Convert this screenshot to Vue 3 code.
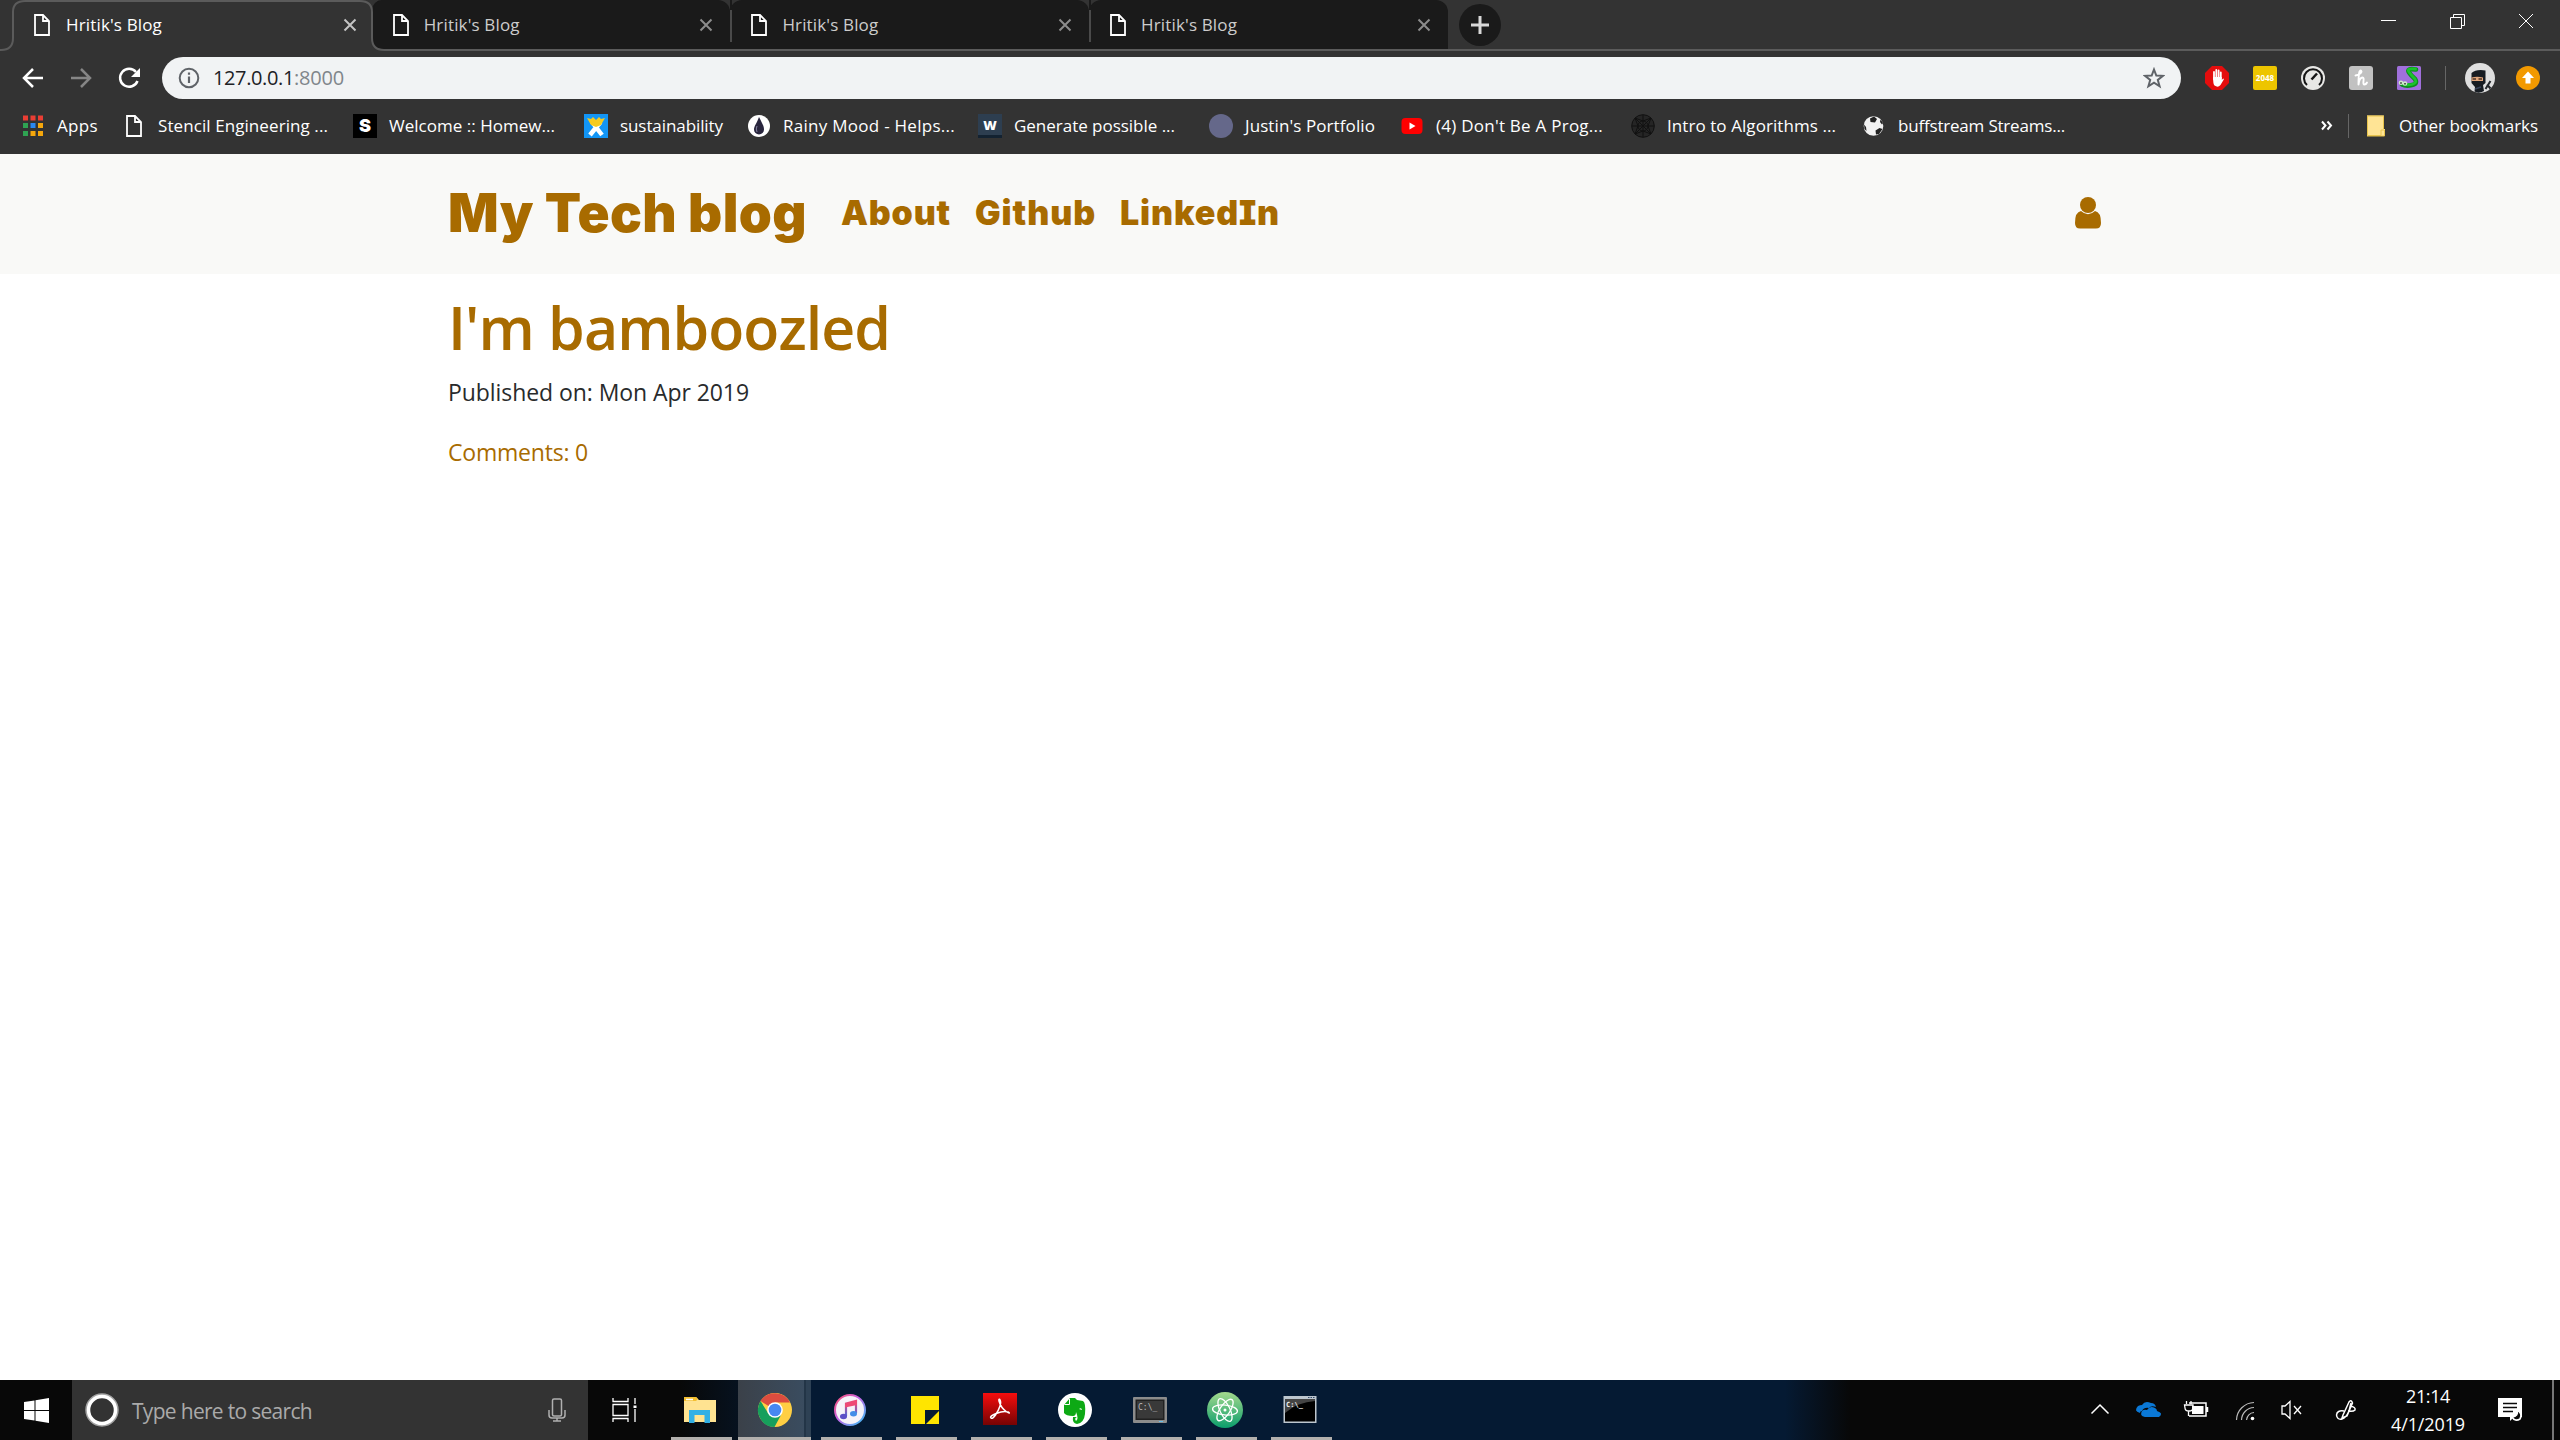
<script setup>
const vFit = {
  mounted(el, { value }) {
    const width = el.getBoundingClientRect().width
    const count = el.textContent.length
    el.style.letterSpacing = `${(value - width) / count}px`
  },
}

const tabs = [1, 2, 3, 4]

const bookmarks = [
  { icon: 'apps', label: 'Apps', slot: 101, text: 41 },
  { icon: 'page', label: 'Stencil Engineering ...', slot: 231, text: 170 },
  { icon: 's', label: 'Welcome :: Homew...', slot: 231, text: 166 },
  { icon: 'x', label: 'sustainability', slot: 163, text: 103 },
  { icon: 'drop', label: 'Rainy Mood - Helps...', slot: 231, text: 172 },
  { icon: 'w', label: 'Generate possible ...', slot: 231, text: 161 },
  { icon: 'dot', label: "Justin's Portfolio", slot: 191, text: 130 },
  { icon: 'yt', label: "(4) Don't Be A Prog...", slot: 231, text: 167 },
  { icon: 'web', label: 'Intro to Algorithms ...', slot: 231, text: 169 },
  { icon: 'ball', label: 'buffstream Streams...', slot: 231, text: 167 },
]

const links = [
  { label: 'About', width: 110 },
  { label: 'Github', width: 121 },
  { label: 'LinkedIn', width: 160 },
]

const apps = ['explorer', 'chrome', 'itunes', 'sticky', 'acrobat', 'evernote', 'terminal', 'atom', 'cmd']
</script>

<template>
  <div class="screen">
    <div class="tabstrip">
      <div v-for="(t, i) in tabs" :key="t" class="tab" :class="{ active: i === 0, last: i === 3, second: i === 1 }">
        <svg v-if="i === 0" class="outline" width="386" height="51" viewBox="0 0 386 51">
          <path d="M0 51V50H1Q13 50 13 38V12Q13 1 25 1H360Q372 1 372 12V38Q372 50 384 50H386V51Z" fill="#333" />
          <path d="M0 50H1Q13 50 13 38V12Q13 1 25 1H360Q372 1 372 12V38Q372 50 384 50H386" fill="none" stroke="#5b5b5b" stroke-width="2" />
        </svg>
        <svg class="page" width="18" height="24" viewBox="0 0 18 24"><path d="M2 2H10L16 8V22H2ZM10 2V8H16" /></svg>
        <span v-fit="96" class="title">Hritik's Blog</span>
        <svg class="close" width="14" height="14" viewBox="0 0 14 14"><path d="M1.500 1.500L12.500 12.500M12.500 1.500L1.500 12.500" /></svg>
      </div>
      <div class="newtab">
        <svg width="18" height="18" viewBox="0 0 18 18"><path d="M9 0V18M0 9H18" stroke="#d8d8d8" stroke-width="3" /></svg>
      </div>
      <svg class="winbtns" width="160" height="24" viewBox="0 0 160 24" fill="none" stroke="#fff" stroke-width="1">
        <path d="M4 12.500H19M73.500 9.500H84.500V20.500H73.500ZM76.500 9.500V6.500H87.500V17.500H84.500M142 6L156 20M156 6L142 20" />
      </svg>
    </div>

    <div class="toolbar">
      <svg class="nav" width="150" height="42" viewBox="0 0 150 42" fill="none" stroke="#fff" stroke-width="2.500">
        <path d="M43 21H25M33 12L24 21L33 30" />
        <path stroke="#868686" d="M71 21H90M81 12L90 21L81 30" />
        <path d="M136 15A9 9 0 1 0 137.500 24" /><path d="M140 11V20H131Z" fill="#fff" stroke="none" />
      </svg>
      <div class="omnibox">
        <svg width="22" height="22" viewBox="0 0 22 22" fill="none" stroke="#5f6368" stroke-width="2"><circle cx="11" cy="11" r="9.300" /><path d="M11 9.500V16M11 5.500V7.800" stroke-width="2.200" /></svg>
        <span class="url"><b v-fit="81">127.0.0.1</b><i v-fit="50">:8000</i></span>
        <svg class="star" width="22" height="22" viewBox="0 0 22 22" fill="none" stroke="#5f6368" stroke-width="2"><path d="M11 2.500L13.300 8.500L20 8.800L14.800 12.900L16.600 19.300L11 15.700L5.400 19.300L7.200 12.900L2 8.800L8.700 8.500Z" /></svg>
      </div>
      <div class="exts">
        <svg width="24" height="24" viewBox="0 0 24 24"><path d="M7 0H17L24 7V17L17 24H7L0 17V7Z" fill="#e40d0d" /><path d="M9 13V6M11.300 12V4M13.600 12V4.500M15.800 13V6.500" stroke="#fff" stroke-width="1.800" stroke-linecap="round" /><path d="M8.100 11H16.700V14L18.200 12.500Q19.500 12.500 18.500 14L15.500 19Q13 22 9.500 19.500Q8 18 8.100 11Z" fill="#fff" /></svg>
        <span class="e2048">2048</span>
        <svg width="24" height="24" viewBox="0 0 24 24" fill="none"><circle cx="12" cy="12" r="12" fill="#e7e7e5" /><path d="M6 19A9 9 0 1 1 18 19" stroke="#151515" stroke-width="2" /><path d="M10.500 13.500L16 7.500" stroke="#151515" stroke-width="2.500" /></svg>
        <span class="honey"><svg width="24" height="24" viewBox="0 0 24 24" fill="none" stroke="#fff" stroke-width="1.900" stroke-linecap="round" stroke-linejoin="round"><path d="M6.500 9.500Q12.500 8 12.500 5.500Q12 3.500 10.500 5.500Q9.500 8 9.500 18.500Q10.500 11.500 13.500 11.500Q15 11.500 14.500 15Q14 18.500 15.500 18.500Q17 18.500 18 16.500" /></svg></span>
        <svg width="24" height="24" viewBox="0 0 24 24" fill="none"><rect width="24" height="24" rx="1.500" fill="#a070dc" /><path d="M19 3.500Q9 2 12 6.500Q14 9.500 18 13Q21 18 15 19Q9 20.500 5 18.500" stroke="#0d8c1d" stroke-width="4.600" stroke-linecap="round" /><path d="M18.500 3Q9 2 12 6Q14 9 18 13Q20.500 17 15 18.300Q9 19.500 5 17.500" stroke="#19c42c" stroke-width="2.800" stroke-linecap="round" /><circle cx="4" cy="16.800" r="2.300" fill="#cfe8cb" /><circle cx="8" cy="17.500" r="2.300" fill="#cfe8cb" /><path d="M3.300 17H4.700M7.300 17.700H8.700" stroke="#222" stroke-width="1.400" /></svg>
      </div>
      <i class="vline"></i>
      <svg class="avatar" width="30" height="30" viewBox="0 0 30 30"><circle cx="15" cy="15" r="15" fill="#dfdfdf" /><path d="M6.500 10Q11 6 20.500 7.500L20.500 20L18 22L19 28Q14 31 9.500 28.500L10 24L6.500 20Z" fill="#171c22" /><path d="M6.500 14.500Q12 13 18 14.500V18H6.500Z" fill="#e0a57b" /><path d="M7.500 16H11M13.500 16H17" stroke="#4a3326" stroke-width="1.500" /><path d="M10 26L16 24" stroke="#39445a" stroke-width="1.500" /><path d="M20.500 26L25.500 18M22 21.500L25.500 25.500" stroke="#24282c" stroke-width="2" /></svg>
      <svg class="update" width="24" height="24" viewBox="0 0 24 24"><circle cx="12" cy="12" r="12" fill="#f29900" /><path d="M12 5.500L18 12H14.500V17.500H9.500V12H6Z" fill="#fff" /></svg>
    </div>

    <div class="bookmarks">
      <div v-for="b in bookmarks" :key="b.label" class="bm" :style="{ width: b.slot + 'px' }">
        <svg width="24" height="24" viewBox="0 0 24 24">
          <g v-if="b.icon === 'apps'">
            <path d="M2 1.500h5v5H2zM9.500 1.500h5v5h-5zM17 1.500h5v5h-5z" fill="#ea3e34" />
            <path d="M2 9h5v5H2zM2 17h5v5H2z" fill="#2fa352" /><path d="M9.500 9h5v5h-5z" fill="#2a87f0" />
            <path d="M17 9h5v5h-5zM9.500 17h5v5h-5zM17 17h5v5h-5z" fill="#f5a70c" />
          </g>
          <path v-else-if="b.icon === 'page'" d="M5 2H13L19 8V22H5ZM13 2V8H19" fill="none" stroke="#fff" stroke-width="1.800" />
          <g v-else-if="b.icon === 's'"><rect width="24" height="24" fill="#000" /><text x="12" y="18" text-anchor="middle" fill="#fff" font-family="Inter" font-weight="900" font-size="18">S</text></g>
          <g v-else-if="b.icon === 'x'"><rect width="24" height="24" fill="#1295f5" /><path d="M6 21L16.500 8M18 21L8 8" stroke="#fff" stroke-width="4.500" /><path d="M3 4L7 5L9 3L12 6L15 3L17 5L21 4L17 11L12 13L7 11Z" fill="#f5cb20" /></g>
          <g v-else-if="b.icon === 'drop'"><circle cx="12" cy="12" r="11" fill="#fff" /><path d="M12 3C15 9 17 12 17 15.500A5 5 0 0 1 7 15.500C7 12 10 9 12 3Z" fill="#29263e" /><path d="M10 12Q8.500 15 10 18" stroke="#8583a0" fill="none" /></g>
          <g v-else-if="b.icon === 'w'"><rect width="24" height="24" fill="#2d3e50" /><rect y="21" width="24" height="3" fill="#132231" /><text x="12" y="15.500" text-anchor="middle" fill="#fff" font-family="Open Sans" font-weight="800" font-size="13">W</text></g>
          <circle v-else-if="b.icon === 'dot'" cx="12" cy="12" r="12" fill="#65688a" />
          <g v-else-if="b.icon === 'yt'"><rect x="1.500" y="4" width="21" height="16" rx="4" fill="#f00" /><path d="M9.500 8.500L15.500 12L9.500 15.500Z" fill="#fff" /></g>
          <g v-else-if="b.icon === 'web'" fill="none" stroke="#111" stroke-width="1"><circle cx="12" cy="12" r="11.300" fill="#252525" /><circle cx="12" cy="12" r="5" /><path d="M12 1V23M1 12H23M4 4L20 20M20 4L4 20M4 4L12 7L20 4L17 12L20 20L12 17L4 20L7 12Z" /></g>
          <g v-else><circle cx="11.500" cy="12" r="9.800" fill="#f2f2f2" /><path d="M8 4.500L12 2.500L15 5L13 8.500L8.500 8ZM2 10.500L4 13L4.500 17L2.500 15ZM13.500 16.500L17.500 14L20.500 15L17 20L14 20.500ZM18.500 5.500L21 9L20 10.500L18 8Z" fill="#222" /></g>
        </svg>
        <span v-fit="b.text">{{ b.label }}</span>
      </div>
      <svg class="more" width="12" height="12" viewBox="0 0 12 12" fill="none" stroke="#fff" stroke-width="2"><path d="M1 1.500L4.500 5.500L1 9.500M6.500 1.500L10 5.500L6.500 9.500" /></svg>
      <i class="vline"></i>
      <svg class="folder" width="20" height="24" viewBox="0 0 20 24"><path d="M1 1.500H18V15H19V22H1Z" fill="#ffe495" /><path d="M1.500 2V21.500H15V16H18.500V22H1M1 2H17.500V15" fill="none" stroke="#e8c44c" /></svg>
      <span v-fit="139">Other bookmarks</span>
    </div>

    <header class="site">
      <span v-fit="359" class="brand">My Tech blog</span>
      <nav><a v-for="l in links" :key="l.label" v-fit="l.width">{{ l.label }}</a></nav>
      <svg class="user" width="26" height="32" viewBox="0 0 26 32" fill="#a86b00"><circle cx="13" cy="8" r="8" /><path d="M6 14Q13 20.500 20 14Q26 15 26 26Q26 31.500 21 31.500H5Q0 31.500 0 26Q0 15 6 14Z" /></svg>
    </header>

    <main>
      <h1><span v-fit="442">I'm bamboozled</span></h1>
      <p><span v-fit="301">Published on: Mon Apr 2019</span></p>
      <a class="comments"><span v-fit="140">Comments: 0</span></a>
    </main>

    <footer class="taskbar">
      <div class="start"><svg width="25" height="25" viewBox="0 0 25 25" fill="#fff"><path d="M0 4L10.500 2.500V12H0ZM11.500 2.300L25 0V12H11.500ZM0 13H10.500V22.500L0 21ZM11.500 13H25V25L11.500 22.700Z" /></svg></div>
      <div class="search">
        <svg width="34" height="34" viewBox="0 0 34 34" fill="none"><circle cx="17" cy="17" r="15.500" stroke="#a3a3a3" stroke-width="2.500" /><circle cx="17" cy="17" r="13.500" stroke="#fff" stroke-width="3.500" /></svg>
        <span v-fit="180">Type here to search</span>
        <svg class="mic" width="18" height="24" viewBox="0 0 18 24" fill="none" stroke="#b0b0b0" stroke-width="1.500"><rect x="4.500" y="1" width="9" height="17" rx="1.500" /><path d="M1 12V17Q1 20 4 20H14Q17 20 17 17V12M9 20V23M5 23H13" /></svg>
      </div>
      <svg class="taskview" width="26" height="24" viewBox="0 0 26 24" fill="none" stroke="#fff" stroke-width="1.300"><path d="M1 0V3.500H16V0M1 6.500H16V17.500H1ZM1 24V20.500H16V24M23 0V6M23 11V24" /><rect x="21.500" y="7.500" width="3" height="2.500" fill="#fff" stroke="none" /></svg>
      <div class="apps">
        <div v-for="a in apps" :key="a" class="app" :class="a">
          <svg width="36" height="36" viewBox="0 0 36 36">
            <g v-if="a === 'explorer'"><path d="M2 5H14L17 8H34V30H2Z" fill="#ffe391" /><path d="M2 5H14L16 7L14 9H2Z" fill="#f4bf30" /><path d="M4 7.500H11" stroke="#fff" stroke-width="1.500" /><path d="M7 18H28V31H22.500V23H12.500V31H7Z" fill="#32b0e5" /></g>
            <g v-else-if="a === 'chrome'"><circle cx="18" cy="18" r="17" fill="#ffcf43" /><path d="M18 18L3.500 9A17 17 0 0 1 33 10.500H18Z" fill="#dc4c3f" /><path d="M3.500 9A17 17 0 0 0 17.500 35L24 23L11 21Z" fill="#169f5c" /><circle cx="18" cy="18" r="7.800" fill="#fff" /><circle cx="18" cy="18" r="6.300" fill="#4787f1" /></g>
            <g v-else-if="a === 'itunes'"><circle cx="18" cy="18" r="15" fill="#f6f3f9" stroke="url(#ring)" stroke-width="2" /><path d="M14 24V11.500L24 9V21" stroke="url(#note)" stroke-width="2.200" fill="none" /><path d="M13 11.500L25 8.500V13L13 15.500Z" fill="#ef4a75" /><ellipse cx="11.500" cy="24.500" rx="3.500" ry="2.700" fill="#5c4fc7" /><ellipse cx="21.500" cy="21.800" rx="3.500" ry="2.700" fill="#438de8" /></g>
            <g v-else-if="a === 'sticky'"><path d="M4 4H32V18H18V32H4Z" fill="#ffe500" /><path d="M32 19V32H19Z" fill="#ffe500" /></g>
            <g v-else-if="a === 'acrobat'"><rect x="1" y="1" width="34" height="32" fill="url(#adobe)" /><path d="M9 26C6 24 20 18 26 20C31 23 20 20 17 9C16 5 20 8 18 14C16 20 11 28 9 26Z" fill="none" stroke="#fff" stroke-width="1.500" /></g>
            <g v-else-if="a === 'evernote'"><circle cx="18" cy="18" r="17" fill="#fff" /><path d="M13 6L7 13V21Q9 24 16 24Q19 24 19 20Q22 27 19 29Q17 26 20 25H16Q15 31 20 32Q27 31 28 22Q29 11 26 9L20 8L18 6Z" fill="#0da915" /><path d="M7.500 12.500H12.500V7" stroke="#fff" fill="none" /><path d="M22 17Q24.500 15 25 18Z" fill="#fff" /></g>
            <g v-else-if="a === 'terminal'"><rect x="1" y="5" width="34" height="26" rx="1" fill="#8c8c8c" /><rect x="3.500" y="7.500" width="29" height="20.500" fill="#202020" /><rect x="5" y="9" width="26" height="17.500" fill="#393939" /><text x="6" y="17.500" font-family="DejaVu Sans Mono" font-size="8" fill="#bbb">C:\_</text><path d="M27 29.500H31" stroke="#67bde9" /></g>
            <g v-else-if="a === 'atom'" fill="none" stroke="#fff" stroke-width="1.300"><circle cx="18" cy="18" r="18" fill="url(#atomgreen)" stroke="none" /><ellipse cx="18" cy="18" rx="12.500" ry="5" transform="rotate(6 18 18)" /><ellipse cx="18" cy="18" rx="12.500" ry="5" transform="rotate(64 18 18)" /><ellipse cx="18" cy="18" rx="12.500" ry="5" transform="rotate(124 18 18)" /><circle cx="18" cy="18" r="1.500" fill="#fff" stroke="none" /></g>
            <g v-else><rect x="1.500" y="4" width="33" height="27" fill="#bdc6ce" /><rect x="3" y="7" width="30" height="22.500" fill="#000" /><path d="M3 7H33V9Q16 10 3 21Z" fill="#444" /><text x="4" y="14.500" font-family="DejaVu Sans Mono" font-weight="bold" font-size="7" fill="#eee">C:\_</text><path d="M26 5.500H33" stroke="#334b6a" stroke-dasharray="1.500 1" /></g>
          </svg>
          <i class="line"></i>
        </div>
      </div>
      <div class="tray">
        <svg width="472" height="60" viewBox="0 0 472 60" fill="none" stroke="#fff" stroke-width="1.500">
          <path d="M11.500 33.500L20 25L28.500 33.500" />
          <g stroke="none" fill="#0a78d6"><path d="M60 33Q53 31 58 26Q60 25 62 25Q65 20 71 23Q75 23 76 27Q71 25 69 28Q64 27 62 31Q60 31 60 33Z" /><path d="M65 37Q59 36 62 31Q64 29 67 30Q70 25 75 28Q77 29 77 31Q84 33 79 37Z" /></g>
          <path d="M109 23H126V36H109M127.500 27V32" /><rect x="112" y="26" width="11.500" height="8" fill="#fff" stroke="none" /><path d="M106.500 21V24M111 21V24M104.500 25H113V28Q113 31 109 31Q105 31 105 28ZM108.500 31V36" stroke-width="1.300" />
          <path d="M156.500 40A18 18 0 0 1 174 22.500M161.500 40A13 13 0 0 1 174 27.500M166.500 40A8 8 0 0 1 174 32.500" stroke-width="1.200" stroke="#bbb" /><circle cx="172.500" cy="38.500" r="1.800" fill="#fff" stroke="none" />
          <path d="M202 26H205L210 21.500V38.500L205 34H202ZM214 26L221 34M221 26L214 34" stroke-width="1.300" />
          <path d="M264 31Q257 30 256.500 35Q257 40 262 39Q266 38 269 31L271 23M263 35L269 22Q271 19 272.500 23L267 36L262 38ZM270 26Q276 27 275 30Q273 32 268 31" />
          <g stroke="none" fill="#fff"><path d="M418 18H442V37H434L430 41V37H418Z" /></g><path d="M423 23.500H437M423 27.500H437M423 31.500H433" stroke="#0a0a0a" /><path d="M437 30Q439 36 432 37Q435 42 440 39Q443 34 437 30Z" fill="#0a0a0a" />
        </svg>
        <div class="clock"><span v-fit="44">21:14</span><span v-fit="74">4/1/2019</span></div>
        <i class="peek"></i>
      </div>
    </footer>

    <svg class="defs" width="0" height="0">
      <defs>
        <linearGradient id="ring" x1="0" y1="0" x2="1" y2="1"><stop offset="0" stop-color="#fb4d6c" /><stop offset=".45" stop-color="#c567e8" /><stop offset="1" stop-color="#30c4f5" /></linearGradient>
        <linearGradient id="note" x1="0" y1="0" x2="0" y2="1"><stop offset="0" stop-color="#f04a75" /><stop offset="1" stop-color="#4b69da" /></linearGradient>
        <linearGradient id="adobe" x1="0" y1="0" x2="0" y2="1"><stop offset="0" stop-color="#f50d0d" /><stop offset="1" stop-color="#760303" /></linearGradient>
        <linearGradient id="atomgreen" x1="0" y1="0" x2="0" y2="1"><stop offset="0" stop-color="#a4d98d" /><stop offset="1" stop-color="#0b9e6c" /></linearGradient>
      </defs>
    </svg>
  </div>
</template>

<style>
body { margin: 0; background: #fff; overflow: hidden; }
</style>

<style scoped>
* { box-sizing: border-box; }
.screen { width: 2560px; height: 1440px; display: flex; flex-direction: column; font-family: "Open Sans", "Noto Sans", sans-serif; white-space: nowrap; overflow: hidden; background: #fff; }
svg { flex: none; display: block; }
.defs { position: absolute; }
.tabstrip { height: 51px; flex: none; display: flex; align-items: stretch; background: #333; padding-left: 13px; box-shadow: inset 0 -2px #5b5b5b; }
.tab { position: relative; width: 358.700px; height: 49px; display: flex; align-items: center; padding: 0 17px 0 18px; background: #1a1a1a; border-radius: 12px 12px 0 0; }
.tab + .tab { border-left: 2px solid #3f3f3f; border-image: linear-gradient(#1a1a1a 22%, #4a4a4a 22% 84%, #1a1a1a 84%) 1; }
.tab.second { border-image: none; border-left-color: #1a1a1a; border-radius: 10px 12px 0 10px; }
.tab.active { z-index: 1; padding: 0 15px 0 20px; background: #333; }
.outline { position: absolute; left: -13px; top: 0; z-index: -1; }
.page { fill: none; stroke: #fff; stroke-width: 1.800; }
.title { margin-left: 15px; font-size: 17px; color: #ccc; line-height: 24px; }
.second .title, .second ~ .tab .title { margin-left: 14px; }
.active .title { color: #fff; }
.close { margin-left: auto; stroke: #8c8c8c; stroke-width: 2; }
.active .close { stroke: #c4c4c4; }
.newtab { width: 42px; height: 42px; margin: 4px 0 0 11px; border-radius: 50%; background: #1a1a1a; display: grid; place-items: center; }
.winbtns { margin: 8px 23px 0 auto; }
.toolbar { height: 54px; flex: none; background: #333; display: flex; align-items: center; padding: 0 20px 0 0; }
.nav { margin-right: 12px; }
.omnibox { width: 2019px; height: 42px; border-radius: 21px; background: #f1f3f4; display: flex; align-items: center; padding: 0 16px; }
.url { margin-left: 13px; font-size: 20px; line-height: 28px; display: flex; }
.url b { font-weight: 400; color: #202124; }
.url i { font-style: normal; color: #80868b; }
.star { margin-left: auto; }
.exts { display: flex; gap: 24px; margin-left: 24px; }
.e2048 { width: 24px; height: 24px; background: #edc500; border-radius: 2px; color: #fff; font: 700 8px/24px "Open Sans", sans-serif; text-align: center; }
.honey { background: #c1c1c1; border-radius: 3px; }
.vline { width: 1px; height: 24px; background: #666; flex: none; }
.toolbar .vline { margin-left: 24px; }
.avatar { margin-left: 19px; }
.update { margin-left: 21px; }
.bookmarks { height: 49px; flex: none; background: #333; display: flex; align-items: center; padding: 0 21px 7px 21px; color: #fff; font-size: 17px; line-height: 24px; }
.bm { display: flex; align-items: center; gap: 12px; flex: none; }
.more { margin-left: 228px; }
.bookmarks .vline { margin-left: 15px; }
.folder { margin: 0 13px 0 17px; }
.site { height: 120px; flex: none; background: #f9f9f7; display: flex; align-items: center; padding: 0 459px 3px 448px; color: #a86b00; font-family: Inter, sans-serif; font-weight: 900; font-feature-settings: "cv08"; }
.brand { font-size: 53px; line-height: 60px; }
nav { display: flex; gap: 24px; margin-left: 34px; font-size: 34px; line-height: 40px; }
.user { margin-left: auto; }
main { flex: 1; padding-left: 448px; color: #292b2c; }
h1 { margin: 13px 0 0; font-size: 59px; line-height: 80px; font-weight: 600; color: #a86b00; }
p { margin: 7px 0 0; font-size: 23px; line-height: 36px; }
.comments { display: block; margin-top: 24px; font-size: 23px; line-height: 36px; color: #a86b00; }
.taskbar { height: 60px; flex: none; display: flex; align-items: stretch; background: linear-gradient(90deg, #080808 0 680px, #051a33 790px 1785px, #080808 1850px); color: #fff; }
.start { width: 72px; display: grid; place-items: center; }
.search { width: 516px; background: #333; display: flex; align-items: center; padding: 0 22px 0 13px; color: #aaa; font-size: 21px; }
.search span { margin-left: 13px; padding-top: 2px; }
.mic { margin-left: auto; }
.taskview { margin: 18px 0 0 24px; }
.apps { display: flex; margin-left: 25px; }
.app { position: relative; width: 75px; padding: 12px 0 0 19px; }
.app.chrome { background: linear-gradient(90deg, #3b4149, #3a4c5f 66px, #233547 66px 68px, #2e4154 68px 73px, transparent 73px); }
.line { position: absolute; left: 8px; bottom: 0; width: 61px; height: 3px; background: #b3b0ad; }
.chrome .line { left: 0; width: 73px; }
.tray { margin-left: auto; display: flex; position: relative; }
.clock { position: absolute; left: 308px; top: 2px; width: 80px; display: flex; flex-direction: column; align-items: center; font-size: 18px; line-height: 28px; }
.peek { width: 8px; border-left: 2px solid #777; }
</style>
